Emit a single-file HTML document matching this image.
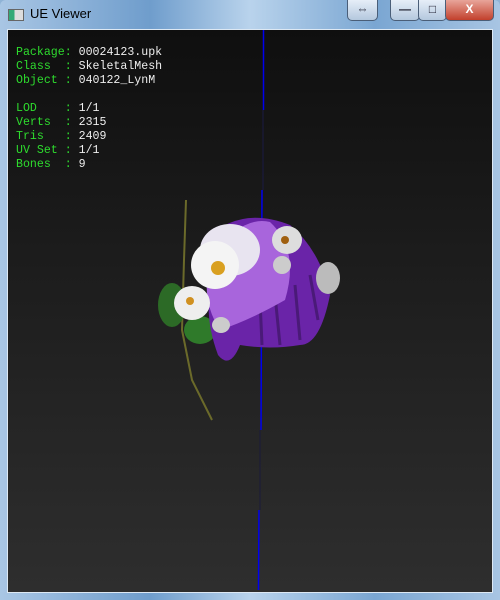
<!DOCTYPE html>
<html><head><style>
html,body{margin:0;padding:0;width:500px;height:600px;overflow:hidden;background:#8fb3d6}
.frame{position:absolute;left:0;top:0;width:500px;height:600px;background:linear-gradient(90deg,#a9c6e4,#6f9dcc 30%,#b9d3ec 50%,#7aa6d2 75%,#a8c5e3);border-radius:6px 6px 0 0}
.title{position:absolute;left:30px;top:6px;font:13px "Liberation Sans",sans-serif;color:#000}
.icon{position:absolute;left:8px;top:9px;width:14px;height:10px;border:1px solid #666;background:linear-gradient(90deg,#3a7 0 40%,#ddd 40%)}
.client{position:absolute;left:8px;top:30px;width:484px;height:562px;background:linear-gradient(#0f0f0f,#1c1c1c 40%,#2e2e2e);outline:1px solid #dde8f3}
.txt{position:absolute;left:16px;top:46px;font:11.6px/14px "Liberation Mono",monospace;color:#eee;white-space:pre;margin:0}
.g{color:#2edc2e}
.btn{position:absolute;top:0;height:20px;border:1px solid #4a5e78;border-top:none;border-radius:0 0 5px 5px;background:linear-gradient(#e6eef8,#b4c8de);font:bold 12px "Liberation Sans",sans-serif;color:#223;text-align:center;line-height:18px}
</style></head><body>
<div class="frame"></div>
<div class="icon"></div>
<div class="title">UE Viewer</div>
<div class="btn" style="left:347px;width:29px">&#8660;</div>
<div class="btn" style="left:390px;width:28px">&#8212;</div>
<div class="btn" style="left:418px;width:27px">&#9633;</div>
<div class="btn" style="left:445px;width:47px;background:linear-gradient(#e8a59a,#c2402c);color:#fff">X</div>
<div class="client"></div>
<svg style="position:absolute;left:0;top:0" width="500" height="600">
<line x1="263.5" y1="30" x2="263.5" y2="110" stroke="#0000ee" stroke-width="1.5"/>
<line x1="263" y1="110" x2="263" y2="190" stroke="#1a1a44" stroke-width="1"/>
<line x1="262" y1="190" x2="261" y2="430" stroke="#0000ee" stroke-width="1.5"/>
<line x1="260" y1="430" x2="260" y2="510" stroke="#1a1a3a" stroke-width="1"/>
<line x1="259" y1="510" x2="258.5" y2="590" stroke="#0000ee" stroke-width="1.5"/>
<path d="M186 200 L184 260 L182 330 L192 380 L212 420" stroke="#6b6a2a" stroke-width="2" fill="none"/>
<ellipse cx="172" cy="305" rx="14" ry="22" fill="#2c6a26"/>
<ellipse cx="200" cy="330" rx="16" ry="14" fill="#2f7a2a"/>
<path d="M205 240 Q240 205 290 225 Q320 250 330 295 Q320 345 300 345 Q270 350 240 345 Q230 370 218 355 Q205 320 210 290 Z" fill="#6a24a8"/>
<path d="M260 300 L262 345 M275 295 L280 345 M295 285 L300 340 M310 275 L318 320" stroke="#4a1a78" stroke-width="3"/>
<path d="M210 260 Q240 215 270 222 Q300 250 285 300 Q250 320 220 330 Q200 300 210 260 Z" fill="#a865dc"/>
<ellipse cx="230" cy="250" rx="30" ry="26" fill="#e8e4f0"/>
<ellipse cx="215" cy="265" rx="24" ry="24" fill="#f4f4f4"/>
<circle cx="218" cy="268" r="7" fill="#d9a020"/>
<ellipse cx="192" cy="303" rx="18" ry="17" fill="#eee"/>
<circle cx="190" cy="301" r="4" fill="#d09020"/>
<ellipse cx="287" cy="240" rx="15" ry="14" fill="#ddd"/>
<circle cx="285" cy="240" r="4" fill="#a06010"/>
<ellipse cx="328" cy="278" rx="12" ry="16" fill="#bbb"/>
<ellipse cx="282" cy="265" rx="9" ry="9" fill="#ccc"/>
<ellipse cx="221" cy="325" rx="9" ry="8" fill="#ccc"/>
</svg>
<pre class="txt"><span class="g">Package:</span> 00024123.upk
<span class="g">Class  :</span> SkeletalMesh
<span class="g">Object :</span> 040122_LynM

<span class="g">LOD    :</span> 1/1
<span class="g">Verts  :</span> 2315
<span class="g">Tris   :</span> 2409
<span class="g">UV Set :</span> 1/1
<span class="g">Bones  :</span> 9</pre>
</body></html>
